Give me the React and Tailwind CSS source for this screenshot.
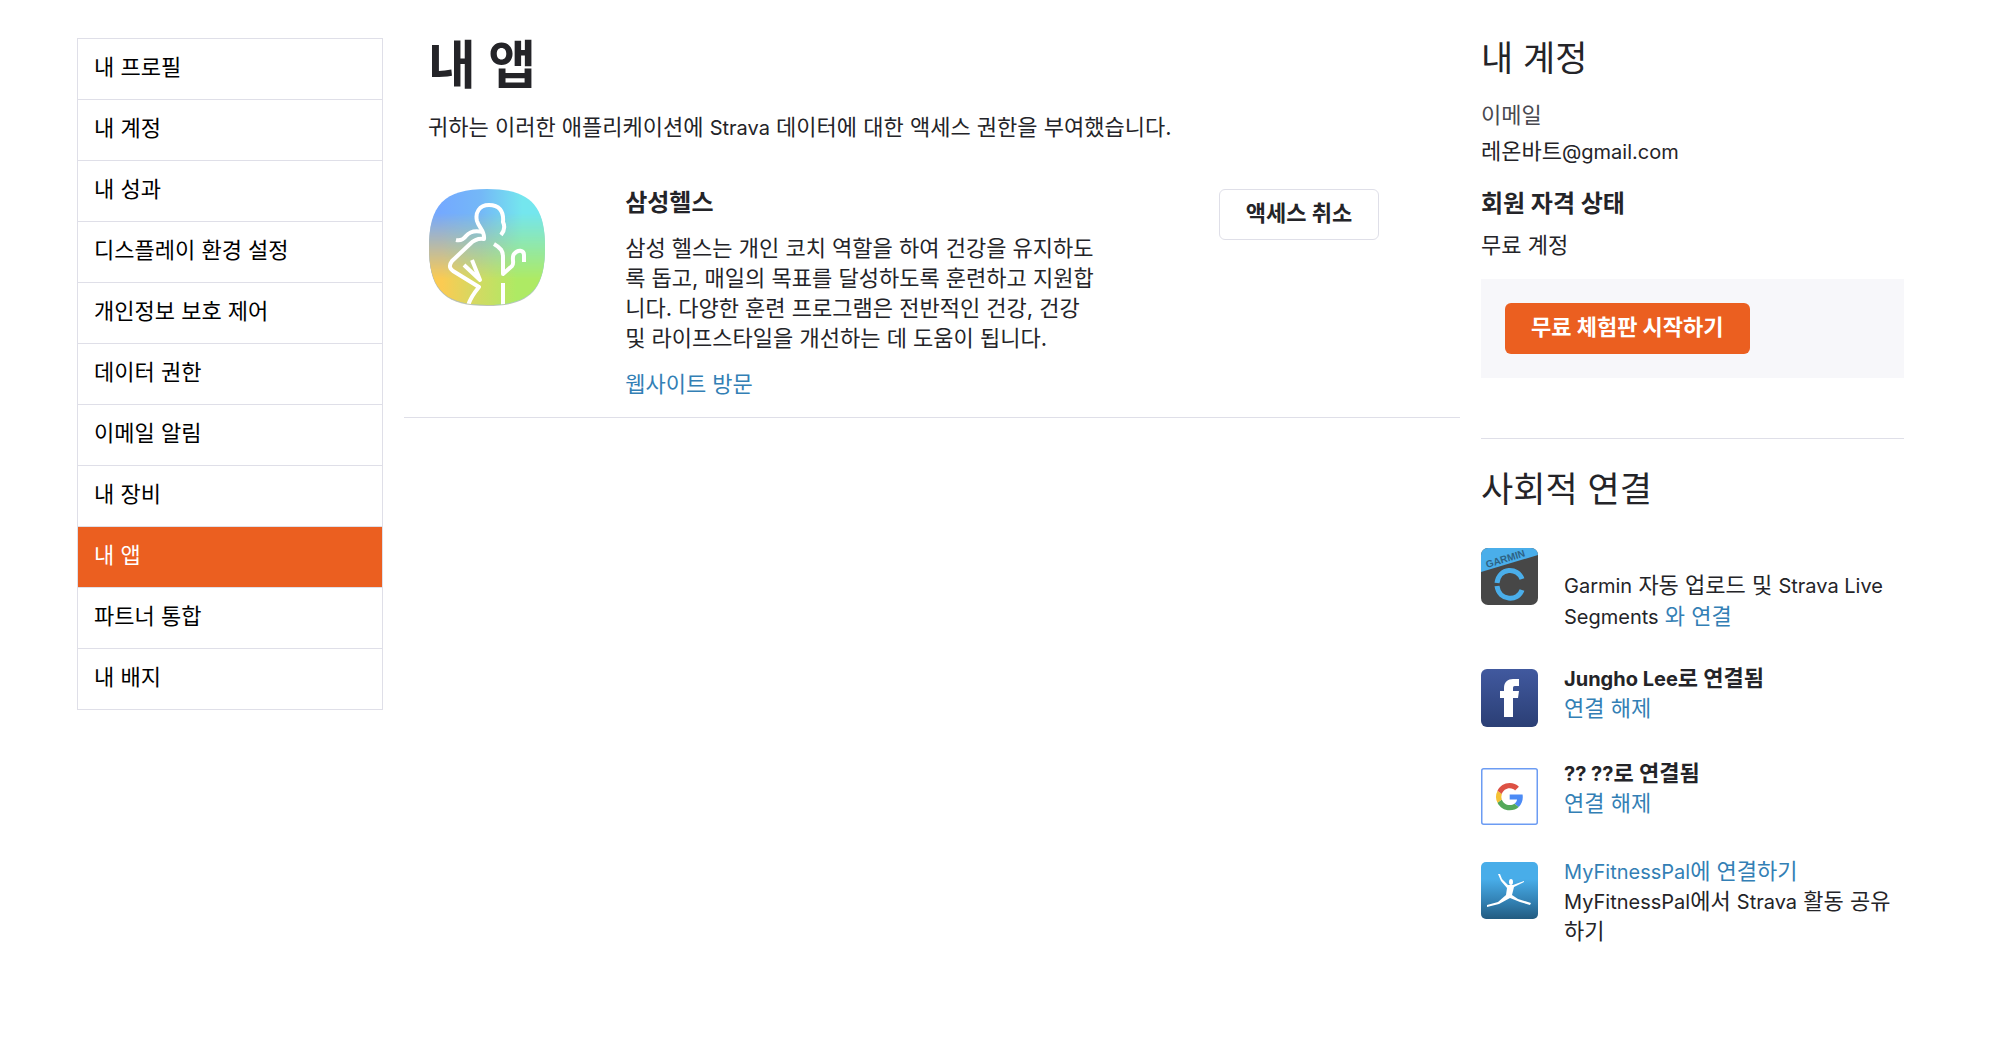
import React from "react";

const navItems = [
  "내 프로필",
  "내 계정",
  "내 성과",
  "디스플레이 환경 설정",
  "개인정보 보호 제어",
  "데이터 권한",
  "이메일 알림",
  "내 장비",
  "내 앱",
  "파트너 통합",
  "내 배지",
];

// Latin runs are set smaller than the Hangul around them
function Latin({ children }) {
  return <span className="text-xl leading-none">{children}</span>;
}

function SamsungHealthIcon() {
  return (
    <svg viewBox="0 0 118 120" className="w-[118px] h-[120px]" role="img" aria-label="Samsung Health">
      <defs>
        <linearGradient id="shTop" x1="0" y1="0" x2="1" y2="0">
          <stop offset="0.1" stopColor="#74a9ff" />
          <stop offset="0.45" stopColor="#74b8f7" />
          <stop offset="0.8" stopColor="#74e6ee" />
        </linearGradient>
        <linearGradient id="shBottom" x1="0" y1="0" x2="1" y2="0">
          <stop offset="0.12" stopColor="#fbcb52" />
          <stop offset="0.4" stopColor="#d4d962" />
          <stop offset="0.75" stopColor="#aeea64" />
        </linearGradient>
        <linearGradient id="shFade" x1="0" y1="0" x2="0" y2="1">
          <stop offset="0.2" stopColor="#fff" stopOpacity="0" />
          <stop offset="0.75" stopColor="#fff" stopOpacity="1" />
        </linearGradient>
        <mask id="shMask">
          <rect width="118" height="120" fill="url(#shFade)" />
        </mask>
        <clipPath id="shClip">
          <path d="M59 0C102 0 117 16 117 58S102 116 59 116 1 100 1 58 16 0 59 0z" />
        </clipPath>
      </defs>
      <path d="M59 2C102 2 117 17 117 59S102 117 59 117 1 101 1 59 16 2 59 2z" fill="#bfc4b6" />
      <g clipPath="url(#shClip)">
        <rect width="118" height="118" fill="url(#shTop)" />
        <rect width="118" height="118" fill="url(#shBottom)" mask="url(#shMask)" />
        <g fill="none" stroke="#fff" strokeWidth="4" strokeLinejoin="round">
          <path d="M73 46C77 41 77 37 75 33C76 22 71 16 61 16C51 16 47 24 49 32C51 39 57 42 56 50C50 49 46 51 42 55L24 72C21 76 21 79 25 82L51 98C46 104 42 109 40 117" />
          <path d="M55 43C47 41 42 42 38 47C35 51 32 52 28 51" />
          <path d="M66 55C73 59 75 62 75 68V85L84 77C87 74 83 69 86 65C90 60 96 61 96 66V73" />
          <path d="M36 76L52 91L44 71" />
          <path d="M75 94V118" />
        </g>
      </g>
    </svg>
  );
}

function GarminIcon() {
  return (
    <svg viewBox="0 0 57 57" className="w-[57px] h-[57px]" role="img" aria-label="Garmin Connect">
      <defs>
        <clipPath id="gClip">
          <rect width="57" height="57" rx="7" />
        </clipPath>
      </defs>
      <g clipPath="url(#gClip)">
        <rect width="57" height="57" fill="#474747" />
        <path d="M0 0H57V7L0 24z" fill="#4aaeea" />
        <text x="6" y="20" transform="rotate(-17 6 20)" fill="#2e6385" className="font-['Liberation_Sans',sans-serif] text-[10px] font-bold">
          GARMIN
        </text>
        <g fill="none" stroke="#4aaeea" strokeWidth="5">
          <path d="M16 35C18 19 37 19 41 31" />
          <path d="M16 38C18 53 37 54 41 42" />
        </g>
      </g>
    </svg>
  );
}

function FacebookIcon() {
  return (
    <svg viewBox="0 0 57 58" className="w-[57px] h-[58px]" role="img" aria-label="Facebook">
      <defs>
        <linearGradient id="fbFill" x1="0" y1="0" x2="0" y2="1">
          <stop offset="0" stopColor="#41599f" />
          <stop offset="1" stopColor="#2b3f75" />
        </linearGradient>
      </defs>
      <rect width="57" height="58" rx="6" fill="url(#fbFill)" />
      <path d="M23 48V29H19V22H23V19C23 13 27 10 32 10H38V17H34C32 17 32 18 32 20V22H38L37 29H32V48z" fill="#fff" />
    </svg>
  );
}

function GoogleIcon() {
  return (
    <svg viewBox="0 0 57 57" className="w-[57px] h-[57px]" role="img" aria-label="Google">
      <rect x="0.75" y="0.75" width="55.5" height="55.5" rx="2" fill="#fff" stroke="#6c9cf3" strokeWidth="1.5" />
      <g transform="translate(15 15) scale(1.14)">
        <path d="M23.5 12.3c0-.9-.1-1.5-.2-2.2H12v4.3h6.500c-.2 1.300-.9 2.700-2.300 3.700l3.700 2.900c2.300-2.100 3.600-5.100 3.600-8.700z" fill="#4c8bf5" />
        <path d="M12 24c3.200 0 6-1.100 7.900-2.900l-3.700-2.900c-1 .7-2.400 1.200-4.200 1.200-3.200 0-5.900-2.100-6.900-5L1.300 17.300C3.300 21.300 7.300 24 12 24z" fill="#53a85a" />
        <path d="M5.100 14.400a7.400 7.400 0 0 1 0-4.700L1.300 6.700a12 12 0 0 0 0 10.700z" fill="#f5c235" />
        <path d="M12 4.700c2.300 0 3.800 1 4.700 1.800l3.400-3.300C18 1.200 15.200 0 12 0 7.300 0 3.300 2.700 1.300 6.700l3.800 3c1-2.900 3.700-5 6.900-5z" fill="#dd5144" />
      </g>
    </svg>
  );
}

function MyFitnessPalIcon() {
  return (
    <svg viewBox="0 0 57 57" className="w-[57px] h-[57px]" role="img" aria-label="MyFitnessPal">
      <defs>
        <linearGradient id="mfpFill" x1="0" y1="0" x2="0" y2="1">
          <stop offset="0.3" stopColor="#48ade9" />
          <stop offset="0.7" stopColor="#3280b2" />
          <stop offset="1" stopColor="#235b80" />
        </linearGradient>
      </defs>
      <rect width="57" height="57" rx="5" fill="url(#mfpFill)" />
      <ellipse cx="30" cy="20" rx="2" ry="3" fill="#fff" />
      <path
        d="M17 12L19 12L21 17L27 23L32 23L43 19L43 20L33 25L31 33L37 37L50 41L49 43L39 40L29 36L18 42L6 45L6 43L17 40L25 33L26 26L20 19z"
        fill="#fff"
      />
    </svg>
  );
}

function SideNav() {
  return (
    <nav className="mt-[38px]">
      <ul className="border border-[#dfdfe8] divide-y divide-[#dfdfe8]">
        {navItems.map((item) => (
          <li key={item}>
            <a
              href="#"
              aria-current={item === "내 앱" ? "page" : undefined}
              className={
                item === "내 앱"
                  ? "flex items-center h-15 px-4 pb-1 bg-[#eb5f20] text-white"
                  : "flex items-center h-15 px-4 pb-1 text-black"
              }
            >
              {item}
            </a>
          </li>
        ))}
      </ul>
    </nav>
  );
}

function MyApps() {
  return (
    <main className="border-b border-[#dfdfe8] pl-6 pt-9 pb-[18px]">
      <h1 className="text-[52px] leading-[60px] font-bold">내 앱</h1>
      <p className="mt-4">
        귀하는 이러한 애플리케이션에 <Latin>Strava</Latin> 데이터에 대한 액세스 권한을 부여했습니다.
      </p>
      <section className="mt-[47px] grid grid-cols-[197fr_593fr_241fr]">
        <SamsungHealthIcon />
        <div>
          <h2 className="text-2xl leading-7 font-bold">삼성헬스</h2>
          <p className="mt-4 max-w-[474px]">
            삼성 헬스는 개인 코치 역할을 하여 건강을 유지하도록 돕고, 매일의 목표를 달성하도록 훈련하고 지원합니다. 다양한 훈련
            프로그램은 전반적인 건강, 건강 및 라이프스타일을 개선하는 데 도움이 됩니다.
          </p>
          <a href="#" className="mt-4 inline-block text-[#337fb5]">
            웹사이트 방문
          </a>
        </div>
        <div>
          <button className="h-[51px] px-[26px] pb-1 border border-[#dfdfe8] rounded-md font-bold whitespace-nowrap">액세스 취소</button>
        </div>
      </section>
    </main>
  );
}

function Account() {
  return (
    <section className="border-b border-[#dfdfe8] pt-[34px] pb-[60px]">
      <h2 className="text-[35px] leading-12">내 계정</h2>
      <dl>
        <dt className="mt-[18px] text-[#494950]">이메일</dt>
        <dd className="mt-1.5">
          레온바트<Latin>@gmail.com</Latin>
        </dd>
        <dt className="mt-[22px] text-2xl leading-8 font-bold">회원 자격 상태</dt>
        <dd className="mt-2.5">무료 계정</dd>
      </dl>
      <div className="mt-[19px] p-6 bg-[#f7f7fa]">
        <button className="h-[51px] px-[26px] pb-1 rounded-md bg-[#eb5f20] text-white font-bold whitespace-nowrap">무료 체험판 시작하기</button>
      </div>
    </section>
  );
}

function SocialConnections() {
  return (
    <section className="pt-[26px]">
      <h2 className="text-[35px] leading-12">사회적 연결</h2>
      <ul className="mt-[35px] flex flex-col gap-[31px]">
        <li className="flex gap-[26px]">
          <div className="shrink-0">
            <GarminIcon />
          </div>
          <p className="pt-[22px] leading-[31px]">
            <Latin>Garmin</Latin> 자동 업로드 및 <Latin>Strava Live Segments</Latin>{" "}
            <a href="#" className="text-[#337fb5]">
              와 연결
            </a>
          </p>
        </li>
        <li className="flex gap-[26px]">
          <div className="shrink-0 pt-1.5">
            <FacebookIcon />
          </div>
          <div>
            <p className="font-bold">
              <Latin>Jungho Lee</Latin>로 연결됨
            </p>
            <a href="#" className="text-[#337fb5]">
              연결 해제
            </a>
          </div>
        </li>
        <li className="flex gap-[26px]">
          <div className="shrink-0 pt-2.5">
            <GoogleIcon />
          </div>
          <div>
            <p className="font-bold">
              <Latin>?? ??</Latin>로 연결됨
            </p>
            <a href="#" className="text-[#337fb5]">
              연결 해제
            </a>
          </div>
        </li>
        <li className="flex gap-[26px]">
          <div className="shrink-0 pt-1.5">
            <MyFitnessPalIcon />
          </div>
          <div className="pr-3">
            <a href="#" className="text-[#337fb5]">
              <Latin>MyFitnessPal</Latin>에 연결하기
            </a>
            <p>
              <Latin>MyFitnessPal</Latin>에서 <Latin>Strava</Latin> 활동 공유하기
            </p>
          </div>
        </li>
      </ul>
    </section>
  );
}

export default function App() {
  return (
    <div
      lang="ko"
      className="min-h-screen bg-white pl-[77px] pr-[110px] font-['Inter','Noto_Sans_CJK_KR',sans-serif] text-[22px] leading-[30px] text-[#242428]"
    >
      <div className="grid grid-cols-[306fr_1056fr_423fr] gap-x-[21px] items-start">
        <SideNav />
        <MyApps />
        <aside>
          <Account />
          <SocialConnections />
        </aside>
      </div>
    </div>
  );
}
